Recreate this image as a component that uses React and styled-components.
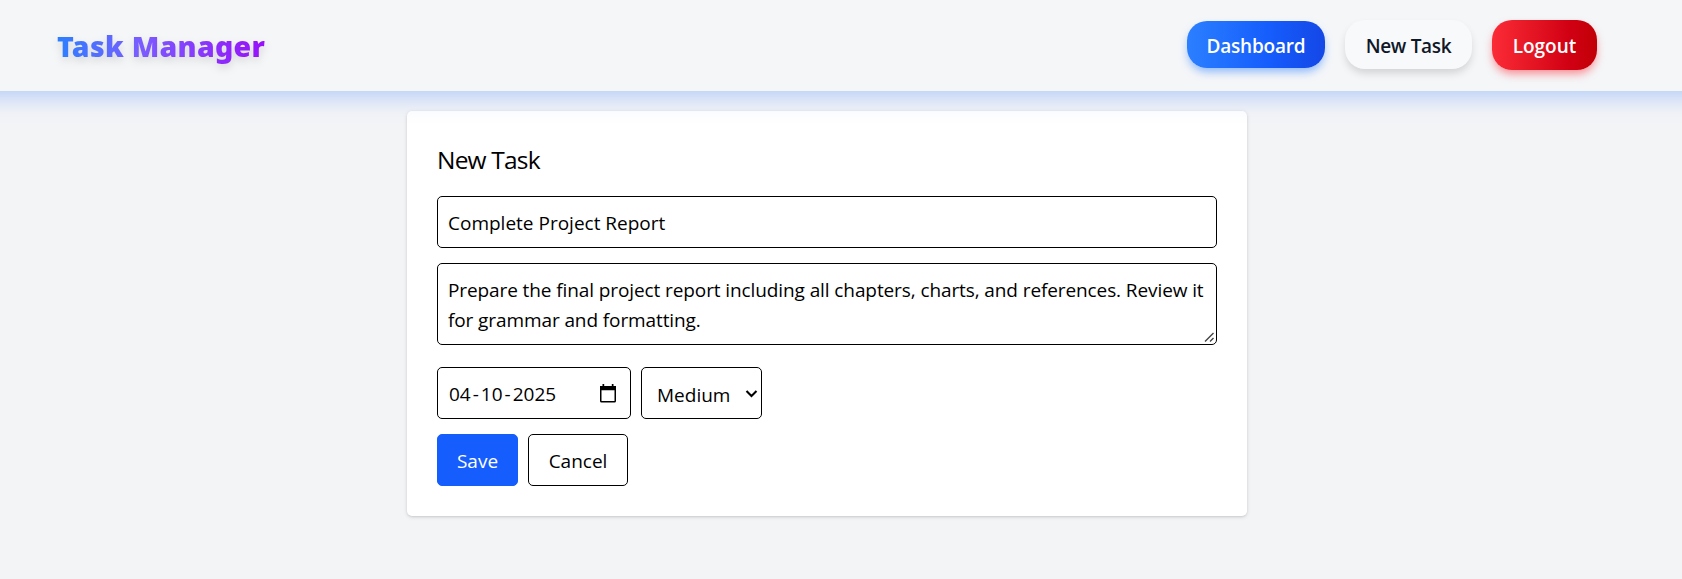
import React from "react";
import styled, { createGlobalStyle, css } from "styled-components";

const GlobalStyle = createGlobalStyle`
  *, *::before, *::after { box-sizing: border-box; }
  body {
    margin: 0;
    background: #f3f4f6;
    color: #000;
    font: 400 19px/30px "Open Sans", "Noto Sans", "Segoe UI", sans-serif;
  }
  h1, h2 { margin: 0; }
  button, input, textarea, select { font: inherit; color: inherit; margin: 0; }
`;

const Page = styled.div`
  min-height: 579px;
  overflow: hidden;
`;

const Header = styled.header`
  position: relative;
  z-index: 1;
  display: flex;
  align-items: center;
  justify-content: space-between;
  height: 91px;
  margin: 0 -40px;
  padding: 0 125px 2px 97px;
  background: #f5f6f8;
  box-shadow: 0 4px 23px rgba(43, 120, 255, 0.36);
`;

const Brand = styled.h1`
  padding-top: 3px;
  font-family: "Noto Sans", sans-serif;
  font-size: 28.5px;
  line-height: 40px;
  font-weight: 900;
  letter-spacing: 0.28px;
  color: transparent;
  background: linear-gradient(90deg, #2b7fff, #7a5cff 40%, #9810fa);
  background-clip: text;
  filter: drop-shadow(0 4px 4px rgba(0, 0, 0, 0.13));
`;

const Nav = styled.nav`
  display: flex;
  align-items: center;
  gap: 20px;
`;

const variants = {
  primary: css`
    width: 138px;
    height: 47px;
    color: #fff;
    letter-spacing: -0.2px;
    background: linear-gradient(90deg, #2b7fff, #155dfc 60%, #1447e6);
    box-shadow: 0 5px 8px -1px rgba(43, 127, 255, 0.5);
  `,
  plain: css`
    width: 127px;
    height: 49px;
    color: #101828;
    letter-spacing: -0.3px;
    background: #f8f9fb;
    box-shadow: 0 5px 8px -1px rgba(0, 0, 0, 0.15);
  `,
  danger: css`
    width: 105px;
    height: 50px;
    color: #fff;
    background: linear-gradient(90deg, #fb2c36, #d00013 75%, #c10007);
    box-shadow: 0 5px 8px -1px rgba(251, 44, 54, 0.5);
  `,
};

const NavButton = styled.button`
  padding: 2px 0 0;
  border: 0;
  border-radius: 20px;
  font-weight: 600;
  white-space: nowrap;
  ${(p) => variants[p.$variant]}
`;

const Card = styled.main`
  width: 840px;
  margin: 20px 0 0 407px;
  padding: 30px;
  border-radius: 5px;
  background: #fff;
  box-shadow: 0 1px 4px rgba(0, 0, 0, 0.12), 0 1px 2px rgba(0, 0, 0, 0.08);
`;

const Title = styled.h2`
  padding-top: 2px;
  margin-bottom: 20px;
  font-size: 24.5px;
  line-height: 33px;
  font-weight: 400;
  letter-spacing: -0.8px;
`;

const Form = styled.form`
  display: flex;
  flex-direction: column;
  gap: 15px;
`;

const fieldBox = css`
  border: 1px solid #000;
  border-radius: 5px;
  background: #fff;
`;

const TextInput = styled.input`
  ${fieldBox}
  height: 52px;
  padding: 11px 10px 9px;
  outline: 0;
`;

const TextAreaFrame = styled.div`
  position: relative;
  height: 82px;
  margin-bottom: 7px;
`;

const TextArea = styled.textarea`
  ${fieldBox}
  display: block;
  width: 100%;
  height: 100%;
  padding: 11px 10px 9px;
  outline: 0;
  overflow: hidden;
  resize: none;
  letter-spacing: -0.1px;
`;

const ResizeGrip = styled.svg`
  position: absolute;
  right: 2px;
  bottom: 2px;
`;

const Row = styled.div`
  display: flex;
  gap: 10px;
`;

const DateField = styled.div`
  ${fieldBox}
  display: flex;
  align-items: center;
  justify-content: space-between;
  width: 194px;
  height: 52px;
  padding: 0 14px 0 11px;
`;

const DateText = styled.span`
  padding-top: 1px;
`;

const Dash = styled.span`
  margin: 0 2px;
`;

const SelectFrame = styled.div`
  position: relative;
  width: 121px;
`;

const Select = styled.select`
  ${fieldBox}
  appearance: none;
  width: 100%;
  height: 52px;
  padding: 12px 15px 8px;
`;

const Chevron = styled.svg`
  position: absolute;
  right: 4px;
  top: 22px;
  pointer-events: none;
`;

const Action = styled.button`
  ${fieldBox}
  width: ${(p) => (p.$primary ? 81 : 100)}px;
  height: 52px;
  padding: 2px 0 0;
  ${(p) => p.$primary && css`border-color: #155dfc; background: #155dfc; color: #fff;`}
`;

const CalendarIcon = () => (
  <svg width="16" height="19" viewBox="0 0 16 19">
    <rect x="0.75" y="2.75" width="14.5" height="15" rx="0.8" fill="none" stroke="#000" strokeWidth="1.5" />
    <path d="M0 2h16v4.2H0zM2.5 0h1.7v3H2.5zM11.8 0h1.7v3h-1.7z" />
  </svg>
);

export default function App() {
  return (
    <Page>
      <GlobalStyle />
      <Header>
        <Brand>Task Manager</Brand>
        <Nav>
          <NavButton $variant="primary">Dashboard</NavButton>
          <NavButton $variant="plain">New Task</NavButton>
          <NavButton $variant="danger">Logout</NavButton>
        </Nav>
      </Header>
      <Card>
        <Title>New Task</Title>
        <Form onSubmit={(e) => e.preventDefault()}>
          <TextInput defaultValue="Complete Project Report" />
          <TextAreaFrame>
            <TextArea defaultValue="Prepare the final project report including all chapters, charts, and references. Review it for grammar and formatting." />
            <ResizeGrip width="11" height="11" viewBox="0 0 11 11">
              <path d="M1 9.5L9.5 1M6 9.5L9.5 6" stroke="#444" strokeWidth="1.4" />
            </ResizeGrip>
          </TextAreaFrame>
          <Row>
            <DateField>
              <DateText>
                04<Dash>-</Dash>10<Dash>-</Dash>2025
              </DateText>
              <CalendarIcon />
            </DateField>
            <SelectFrame>
              <Select defaultValue="Medium">
                <option>Low</option>
                <option>Medium</option>
                <option>High</option>
              </Select>
              <Chevron width="13" height="10" viewBox="0 0 13 10">
                <path d="M1.5 2L6.5 7L11.5 2" fill="none" stroke="#000" strokeWidth="2.1" />
              </Chevron>
            </SelectFrame>
          </Row>
          <Row>
            <Action $primary>Save</Action>
            <Action>Cancel</Action>
          </Row>
        </Form>
      </Card>
    </Page>
  );
}
